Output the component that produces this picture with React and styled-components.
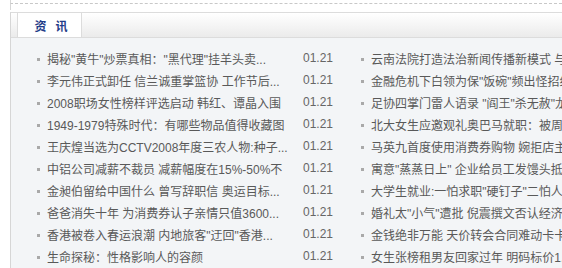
import React from 'react';
import styled, { createGlobalStyle } from 'styled-components';

const GlobalStyle = createGlobalStyle`
  html, body {
    margin: 0;
    padding: 0;
    overflow: hidden;
    background: #fff;
  }
  body {
    font-family: "Liberation Sans", "Noto Sans CJK SC", sans-serif;
    font-size: 12px;
  }
`;

const Wrapper = styled.div`
  margin-left: 10px;
  width: calc(100vw - 10px);
  overflow: hidden;
`;

const TopStrip = styled.div`
  height: 3px;
  border-left: 1px solid #d6d6d6;
  border-bottom: 1px dashed #c8c8c8;
`;

const TopTail = styled.div`
  height: 6px;
  border-left: 1px solid #d6d6d6;
  margin-bottom: 2px;
`;

const Panel = styled.div`
  border-left: 1px solid #d6d6d6;
  border-top: 1px solid #dcdcdc;
`;

const TabBar = styled.div`
  display: flex;
  height: 24px;
  padding-left: 6px;
  border-bottom: 1px solid #dcdcdc;
  background: linear-gradient(#ffffff, #ebebeb);
`;

const Tab = styled.div`
  display: flex;
  align-items: center;
  justify-content: center;
  gap: 9px;
  width: 65px;
  padding-left: 3px;
  box-sizing: border-box;
  background: #fff;
  border-left: 1px solid #dcdcdc;
  border-right: 1px solid #dcdcdc;
  color: #1f3c88;
  font-weight: bold;
  font-size: 12px;
`;

const Content = styled.div`
  display: grid;
  grid-template-columns: 324px 324px;
  padding: 9px 0 0 26px;
  background: #f3f5f7;
  height: 221px;
  overflow: hidden;
`;

const Column = styled.ul`
  margin: 0;
  padding: 0;
  list-style: none;
`;

const Row = styled.li`
  display: grid;
  grid-template-columns: 10px 256px 58px;
  align-items: center;
  height: 22px;
`;

const Bullet = styled.span`
  width: 3px;
  height: 3px;
  margin-top: 2px;
  background: #a9a9a9;
`;

const Title = styled.a`
  color: #595959;
  text-decoration: none;
  white-space: nowrap;
  overflow: hidden;
`;

const Date = styled.span`
  color: #666;
  font-family: "Liberation Sans", sans-serif;
`;

const left = [
  '揭秘"黄牛"炒票真相："黑代理"挂羊头卖...',
  '李元伟正式卸任 信兰诚重掌篮协 工作节后...',
  '2008职场女性榜样评选启动 韩红、谭晶入围',
  '1949-1979特殊时代：有哪些物品值得收藏图',
  '王庆煌当选为CCTV2008年度三农人物:种子...',
  '中铝公司减薪不裁员 减薪幅度在15%-50%不',
  '金昶伯留给中国什么 曾写辞职信 奥运目标...',
  '爸爸消失十年 为消费券认子亲情只值3600...',
  '香港被卷入春运浪潮 内地旅客"迂回"香港...',
  '生命探秘：性格影响人的容颜',
];

const right = [
  '云南法院打造法治新闻传播新模式 与...',
  '金融危机下白领为保"饭碗"频出怪招组...',
  '足协四掌门雷人语录 "阎王"杀无赦"龙...',
  '北大女生应邀观礼奥巴马就职：被周...',
  '马英九首度使用消费券购物 婉拒店主...',
  '寓意"蒸蒸日上" 企业给员工发馒头抵...',
  '大学生就业:一怕求职"硬钉子"二怕人...',
  '婚礼太"小气"遭批 倪震撰文否认经济...',
  '金钱绝非万能 天价转会合同难动卡卡',
  '女生张榜租男友回家过年 明码标价1...',
];

const NewsColumn = ({ items }) => (
  <Column>
    {items.map((t) => (
      <Row key={t}>
        <Bullet />
        <Title href="#">{t}</Title>
        <Date>01.21</Date>
      </Row>
    ))}
  </Column>
);

const App = () => (
  <>
    <GlobalStyle />
    <Wrapper>
      <TopStrip />
      <TopTail />
      <Panel>
        <TabBar>
          <Tab>
            <span>资</span>
            <span>讯</span>
          </Tab>
        </TabBar>
        <Content>
          <NewsColumn items={left} />
          <NewsColumn items={right} />
        </Content>
      </Panel>
    </Wrapper>
  </>
);

export default App;
